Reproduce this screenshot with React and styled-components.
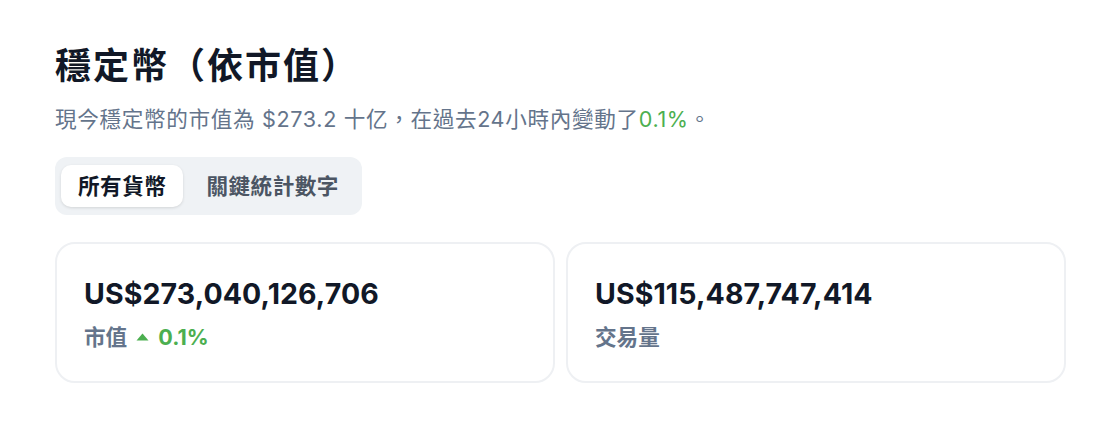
import React from "react";
import styled, { createGlobalStyle } from "styled-components";

const GlobalStyle = createGlobalStyle`
  html, body { margin: 0; padding: 0; background: #ffffff; }
  body {
    font-family: Inter, "Noto Sans CJK TC", "Noto Sans", sans-serif;
    -webkit-font-smoothing: antialiased;
    text-spacing-trim: space-all;
  }
`;

const Page = styled.div`
  padding: 44px 42px 40px 55px;
  display: flex;
  flex-direction: column;
`;

const Title = styled.h1`
  margin: 0;
  font-size: 36px;
  line-height: 44px;
  font-weight: 700;
  color: #111827;
  letter-spacing: 2px;
`;

const Subtitle = styled.p`
  margin: 16px 0 0;
  font-size: 21.6px;
  line-height: 30px;
  color: #64748b;
  letter-spacing: 0.65px;
`;

const Green = styled.span`
  color: #4caf50;
  font-weight: ${(p) => (p.$bold ? 700 : 400)};
`;

const Tabs = styled.div`
  margin-top: 23px;
  align-self: flex-start;
  display: flex;
  gap: 6px;
  padding: 8px 6px;
  background: #eff2f5;
  border-radius: 12px;
`;

const Tab = styled.button`
  border: none;
  font-family: inherit;
  font-size: 21.6px;
  font-weight: 600;
  line-height: 26px;
  letter-spacing: 0.5px;
  padding: 8px 17px;
  border-radius: 10px;
  cursor: pointer;
  background: ${(p) => (p.$active ? "#ffffff" : "transparent")};
  color: ${(p) => (p.$active ? "#111827" : "#4b5563")};
  box-shadow: ${(p) => (p.$active ? "0 1px 3px rgba(0,0,0,0.12)" : "none")};
`;

const Cards = styled.div`
  margin-top: 27px;
  display: grid;
  grid-template-columns: 1fr 1fr;
  gap: 11px;
`;

const Card = styled.div`
  border: 2px solid #eef0f3;
  border-radius: 20px;
  padding: 33px 26px 30px 27px;
  display: flex;
  flex-direction: column;
  gap: 12px;
`;

const Value = styled.div`
  font-size: 28.5px;
  line-height: 34px;
  font-weight: 700;
  color: #111827;
  letter-spacing: 0.1px;
`;

const Label = styled.div`
  display: flex;
  align-items: center;
  gap: 9px;
  font-size: 21.6px;
  line-height: 28px;
  font-weight: 600;
  color: #64748b;
`;

const Caret = () => (
  <svg width="13" height="8" viewBox="0 0 13 8" aria-hidden="true">
    <path d="M6.5 0.5 L12.5 7.5 L0.5 7.5 Z" fill="#4caf50" strokeLinejoin="round" />
  </svg>
);

export default function App() {
  return (
    <>
      <GlobalStyle />
      <Page>
        <Title>穩定幣（依市值）</Title>
        <Subtitle>
          現今穩定幣的市值為 $273.2 十亿，在過去24小時內變動了<Green>0.1%</Green>。
        </Subtitle>
        <Tabs>
          <Tab $active>所有貨幣</Tab>
          <Tab>關鍵統計數字</Tab>
        </Tabs>
        <Cards>
          <Card>
            <Value>US$273,040,126,706</Value>
            <Label>
              市值
              <Caret />
              <Green $bold>0.1%</Green>
            </Label>
          </Card>
          <Card>
            <Value>US$115,487,747,414</Value>
            <Label>交易量</Label>
          </Card>
        </Cards>
      </Page>
    </>
  );
}
